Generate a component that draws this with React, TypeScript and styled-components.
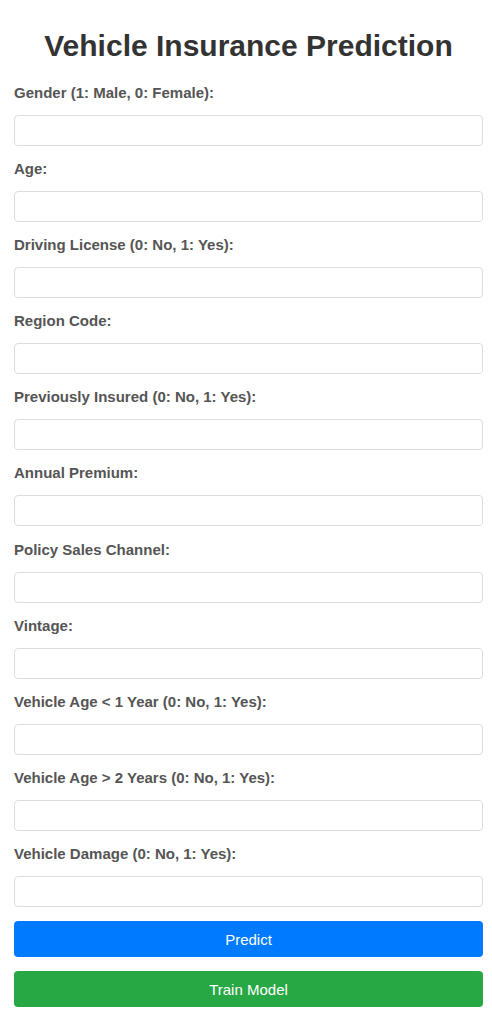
import React from "react";
import styled, { createGlobalStyle } from "styled-components";

const Global = createGlobalStyle`
  html, body { margin: 0; padding: 0; background: #fff; }
  body { font-family: "Liberation Sans", Arial, sans-serif; }
  * { box-sizing: border-box; }
`;

const Page = styled.div`
  padding: 29px 9px 10px 14px;
`;

const Title = styled.h1`
  margin: 0 0 21px;
  font-size: 30px;
  font-weight: bold;
  line-height: 34px;
  color: #333;
  text-align: center;
`;

const Form = styled.form`
  display: flex;
  flex-direction: column;
`;

const Label = styled.label`
  display: block;
  font-size: 15px;
  font-weight: bold;
  line-height: 17px;
  color: #555;
  margin-bottom: 14px;
`;

const Input = styled.input`
  display: block;
  width: 100%;
  height: 31px;
  margin: 0 0 14.1px;
  padding: 6px 8px;
  border: 1px solid #ddd;
  border-radius: 4px;
  font-family: inherit;
  font-size: 15px;
  background: #fff;
  outline: none;
`;

const Button = styled.button<{ $bg: string; $gap: number }>`
  display: block;
  width: 100%;
  height: 36px;
  margin-top: ${(p) => p.$gap}px;
  border: none;
  border-radius: 4px;
  background: ${(p) => p.$bg};
  color: #fff;
  font-family: inherit;
  font-size: 15px;
  cursor: pointer;
`;

const fields = [
  "Gender (1: Male, 0: Female):",
  "Age:",
  "Driving License (0: No, 1: Yes):",
  "Region Code:",
  "Previously Insured (0: No, 1: Yes):",
  "Annual Premium:",
  "Policy Sales Channel:",
  "Vintage:",
  "Vehicle Age < 1 Year (0: No, 1: Yes):",
  "Vehicle Age > 2 Years (0: No, 1: Yes):",
  "Vehicle Damage (0: No, 1: Yes):",
];

export default function App() {
  return (
    <>
      <Global />
      <Page>
        <Title>Vehicle Insurance Prediction</Title>
        <Form onSubmit={(e) => e.preventDefault()}>
          {fields.map((f, i) => (
            <React.Fragment key={f}>
              <Label htmlFor={`f${i}`}>{f}</Label>
              <Input id={`f${i}`} type="text" />
            </React.Fragment>
          ))}
          <Button type="submit" $bg="#007bff" $gap={0}>Predict</Button>
          <Button type="button" $bg="#28a745" $gap={14}>Train Model</Button>
        </Form>
      </Page>
    </>
  );
}
